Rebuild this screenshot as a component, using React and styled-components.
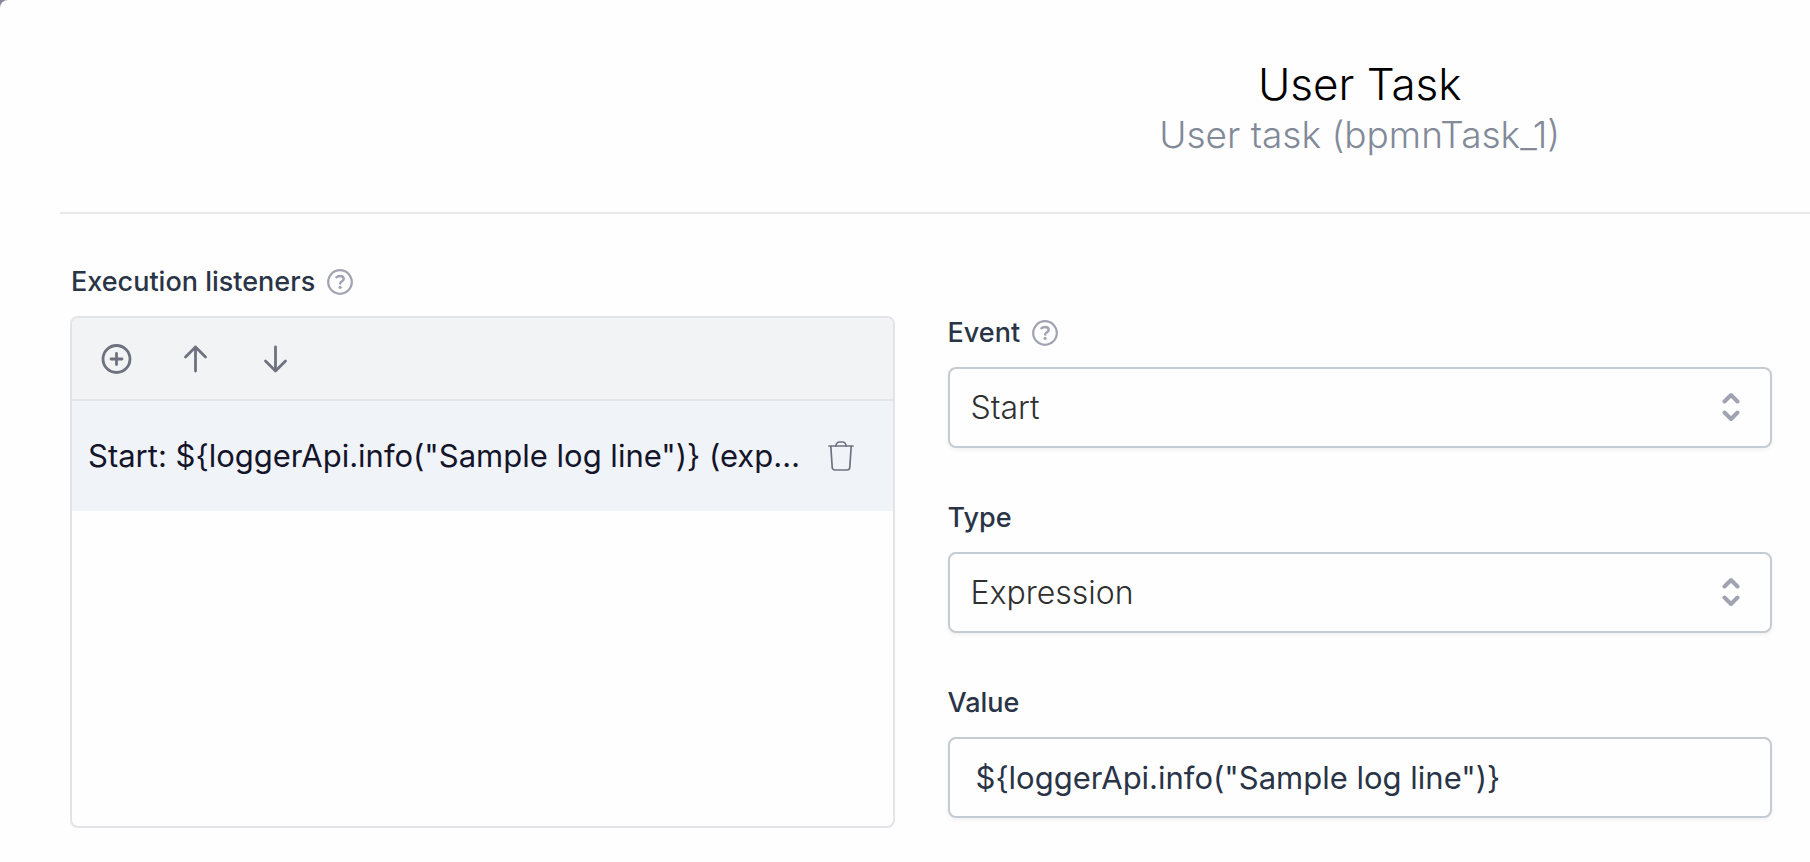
import React, { useState } from 'react';
import styled, { createGlobalStyle } from 'styled-components';

const GlobalStyle = createGlobalStyle`
  *, *::before, *::after { box-sizing: border-box; }
  body {
    margin: 0;
    background: #85879a;
    font-family: Inter, "Open Sans", sans-serif;
    -webkit-font-smoothing: antialiased;
  }
  button, input, select { font: inherit; color: inherit; }
`;

const Dialog = styled.main`
  display: flow-root;
  min-height: 100vh;
  padding-left: 60px;
  background: #fefefe;
  border-top-left-radius: 8px;
`;

const Columns = styled.div`
  display: grid;
  grid-template-columns: minmax(0, 1fr) minmax(0, 1fr);
  column-gap: 53px;
  padding: 0 38px 0 10px;
`;

const Header = styled.header`
  padding: 58px 0 52px;
  border-bottom: 2px solid #e8e9eb;
`;

const Heading = styled.div`
  grid-column: 2;
  text-align: center;
`;

const Title = styled.h1`
  margin: 0;
  font-size: 44px;
  line-height: 52px;
  font-weight: 300;
  color: #000;
`;

const Subtitle = styled.p`
  margin: 0;
  font-size: 37px;
  line-height: 50px;
  font-weight: 300;
  color: #828a99;
`;

const Body = styled(Columns)`
  padding-top: 48px;
  padding-bottom: 34px;
`;

const Label = styled.label`
  font-size: 27px;
  line-height: 40px;
  font-weight: 450;
  color: #293447;
`;

const LabelRow = styled.div`
  display: flex;
  align-items: center;
  gap: 12px;
  padding-left: ${(p) => (p.$inset ? '1px' : '0')};
  margin-bottom: 14px;
`;

const IconButton = styled.button`
  display: flex;
  padding: 0;
  border: 0;
  background: none;
  color: ${(p) => p.$color || '#6e7180'};
  cursor: pointer;
`;

const ListPanel = styled.section`
  display: flex;
  flex-direction: column;
`;

const ListBox = styled.div`
  height: 512px;
  overflow: hidden;
  border: 2px solid #e3e4e8;
  border-radius: 8px;
`;

const Toolbar = styled.div`
  display: flex;
  align-items: center;
  gap: 48px;
  height: 83px;
  padding-left: 28px;
  background: #f1f3f4;
  border-bottom: 2px solid #e3e4e7;
`;

const List = styled.ul`
  margin: 0;
  padding: 0;
  list-style: none;
`;

const ListItem = styled.li`
  display: flex;
  align-items: center;
  gap: 24px;
  height: 110px;
  padding: 0 39px 0 16px;
  background: #f0f3f8;
`;

const ItemText = styled.span`
  flex: 1;
  min-width: 0;
  overflow: hidden;
  font-size: 31px;
  line-height: 40px;
  font-weight: 400;
  color: #14152a;
  text-overflow: ellipsis;
  white-space: nowrap;
`;

const Fields = styled.form`
  display: flex;
  flex-direction: column;
  gap: 50px;
  padding-top: 51px;
`;

const Control = styled.div`
  position: relative;
  height: 81px;
  border: 2px solid #c4cbd1;
  border-radius: 8px;
  background: #fefefe;
  box-shadow: 0 2px 4px rgba(30, 40, 60, 0.06);
`;

const Select = styled.select`
  display: block;
  width: 100%;
  height: 100%;
  padding: 0 60px 0 21px;
  border: 0;
  outline: 0;
  appearance: none;
  background: none;
  font-size: 32px;
  font-weight: 300;
  color: #303030;
`;

const TextInput = styled.input`
  display: block;
  width: 100%;
  height: 100%;
  padding: 0 26px;
  border: 0;
  outline: 0;
  background: none;
  font-size: 31px;
  font-weight: 400;
  color: #293447;
`;

const Chevrons = styled.svg`
  position: absolute;
  top: 22px;
  right: 30px;
  pointer-events: none;
`;

function HelpIcon() {
  return (
    <svg width="26" height="26" viewBox="0 0 26 26" fill="none" stroke="currentColor" strokeWidth="2.2" strokeLinecap="round" strokeLinejoin="round">
      <circle cx="13" cy="13" r="11.8" />
      <path d="M9.4 8.3C10.4 7.4 11.6 7 13 7c2.2 0 3.7 1 3.7 2.9 0 2.2-3.5 2.3-3.5 4.6" strokeWidth="2.4" />
      <circle cx="13.1" cy="18.3" r="1.6" fill="currentColor" stroke="none" />
    </svg>
  );
}

function PlusCircleIcon() {
  return (
    <svg width="32" height="32" viewBox="0 0 32 32" fill="none" stroke="currentColor" strokeWidth="2.8" strokeLinecap="round">
      <circle cx="16.5" cy="16" r="13.5" />
      <path d="M16.500 10.500v11M11 16h11" />
    </svg>
  );
}

function ArrowIcon({ down }) {
  return (
    <svg width="32" height="32" viewBox="0 0 32 32" fill="none" stroke="currentColor" strokeWidth="2.8" strokeLinecap="round" strokeLinejoin="round">
      {down ? <path d="M15.500 4v24M5.500 18l10 10 10-10" /> : <path d="M15.500 28V4M5.500 14l10-10 10 10" />}
    </svg>
  );
}

function TrashIcon() {
  return (
    <svg width="26" height="32" viewBox="0 0 26 32" fill="none" stroke="currentColor" strokeWidth="1.7" strokeLinecap="round" strokeLinejoin="round">
      <path d="M1 6h24M2.800 6l1.400 21.300c.1 1.700 1.200 2.700 2.800 2.700h12c1.600 0 2.700-1 2.800-2.700L23.200 6" />
      <path d="M7.800 6c.5-2.600 1.600-4 3.600-4h3.200c2 0 3.100 1.400 3.600 4" />
    </svg>
  );
}

function SelectField({ id, label, help, options }) {
  return (
    <div>
      <LabelRow>
        <Label htmlFor={id}>{label}</Label>
        {help && (
          <IconButton type="button" $color="#a0a3b1" aria-label={`About ${label}`}>
            <HelpIcon />
          </IconButton>
        )}
      </LabelRow>
      <Control>
        <Select id={id} defaultValue={options[0]}>
          {options.map((option) => (
            <option key={option}>{option}</option>
          ))}
        </Select>
        <Chevrons width="18" height="32" viewBox="0 0 18 32" fill="none" stroke="#a0a3b1" strokeWidth="4" strokeLinecap="round" strokeLinejoin="round">
          <path d="M2.500 10.500L9 4l6.500 6.500M2.500 21.500L9 28l6.500-6.500" />
        </Chevrons>
      </Control>
    </div>
  );
}

export default function App() {
  const [value, setValue] = useState('${loggerApi.info("Sample log line")}');
  return (
    <>
      <GlobalStyle />
      <Dialog>
        <Header>
          <Columns>
            <Heading>
              <Title>User Task</Title>
              <Subtitle>User task (bpmnTask_1)</Subtitle>
            </Heading>
          </Columns>
        </Header>
        <Body>
          <ListPanel aria-labelledby="listeners">
            <LabelRow $inset>
              <Label as="span" id="listeners">Execution listeners</Label>
              <IconButton type="button" $color="#a0a3b1" aria-label="About execution listeners">
                <HelpIcon />
              </IconButton>
            </LabelRow>
            <ListBox>
              <Toolbar>
                <IconButton type="button" aria-label="Add"><PlusCircleIcon /></IconButton>
                <IconButton type="button" aria-label="Move up"><ArrowIcon /></IconButton>
                <IconButton type="button" aria-label="Move down"><ArrowIcon down /></IconButton>
              </Toolbar>
              <List>
                <ListItem>
                  <ItemText>{`Start: ${value} (expression)`}</ItemText>
                  <IconButton type="button" aria-label="Delete"><TrashIcon /></IconButton>
                </ListItem>
              </List>
            </ListBox>
          </ListPanel>
          <Fields>
            <SelectField id="event" label="Event" help options={['Start', 'End']} />
            <SelectField id="type" label="Type" options={['Expression', 'Delegate expression', 'Class']} />
            <div>
              <LabelRow>
                <Label htmlFor="value">Value</Label>
              </LabelRow>
              <Control>
                <TextInput id="value" type="text" value={value} onChange={(e) => setValue(e.target.value)} />
              </Control>
            </div>
          </Fields>
        </Body>
      </Dialog>
    </>
  );
}
